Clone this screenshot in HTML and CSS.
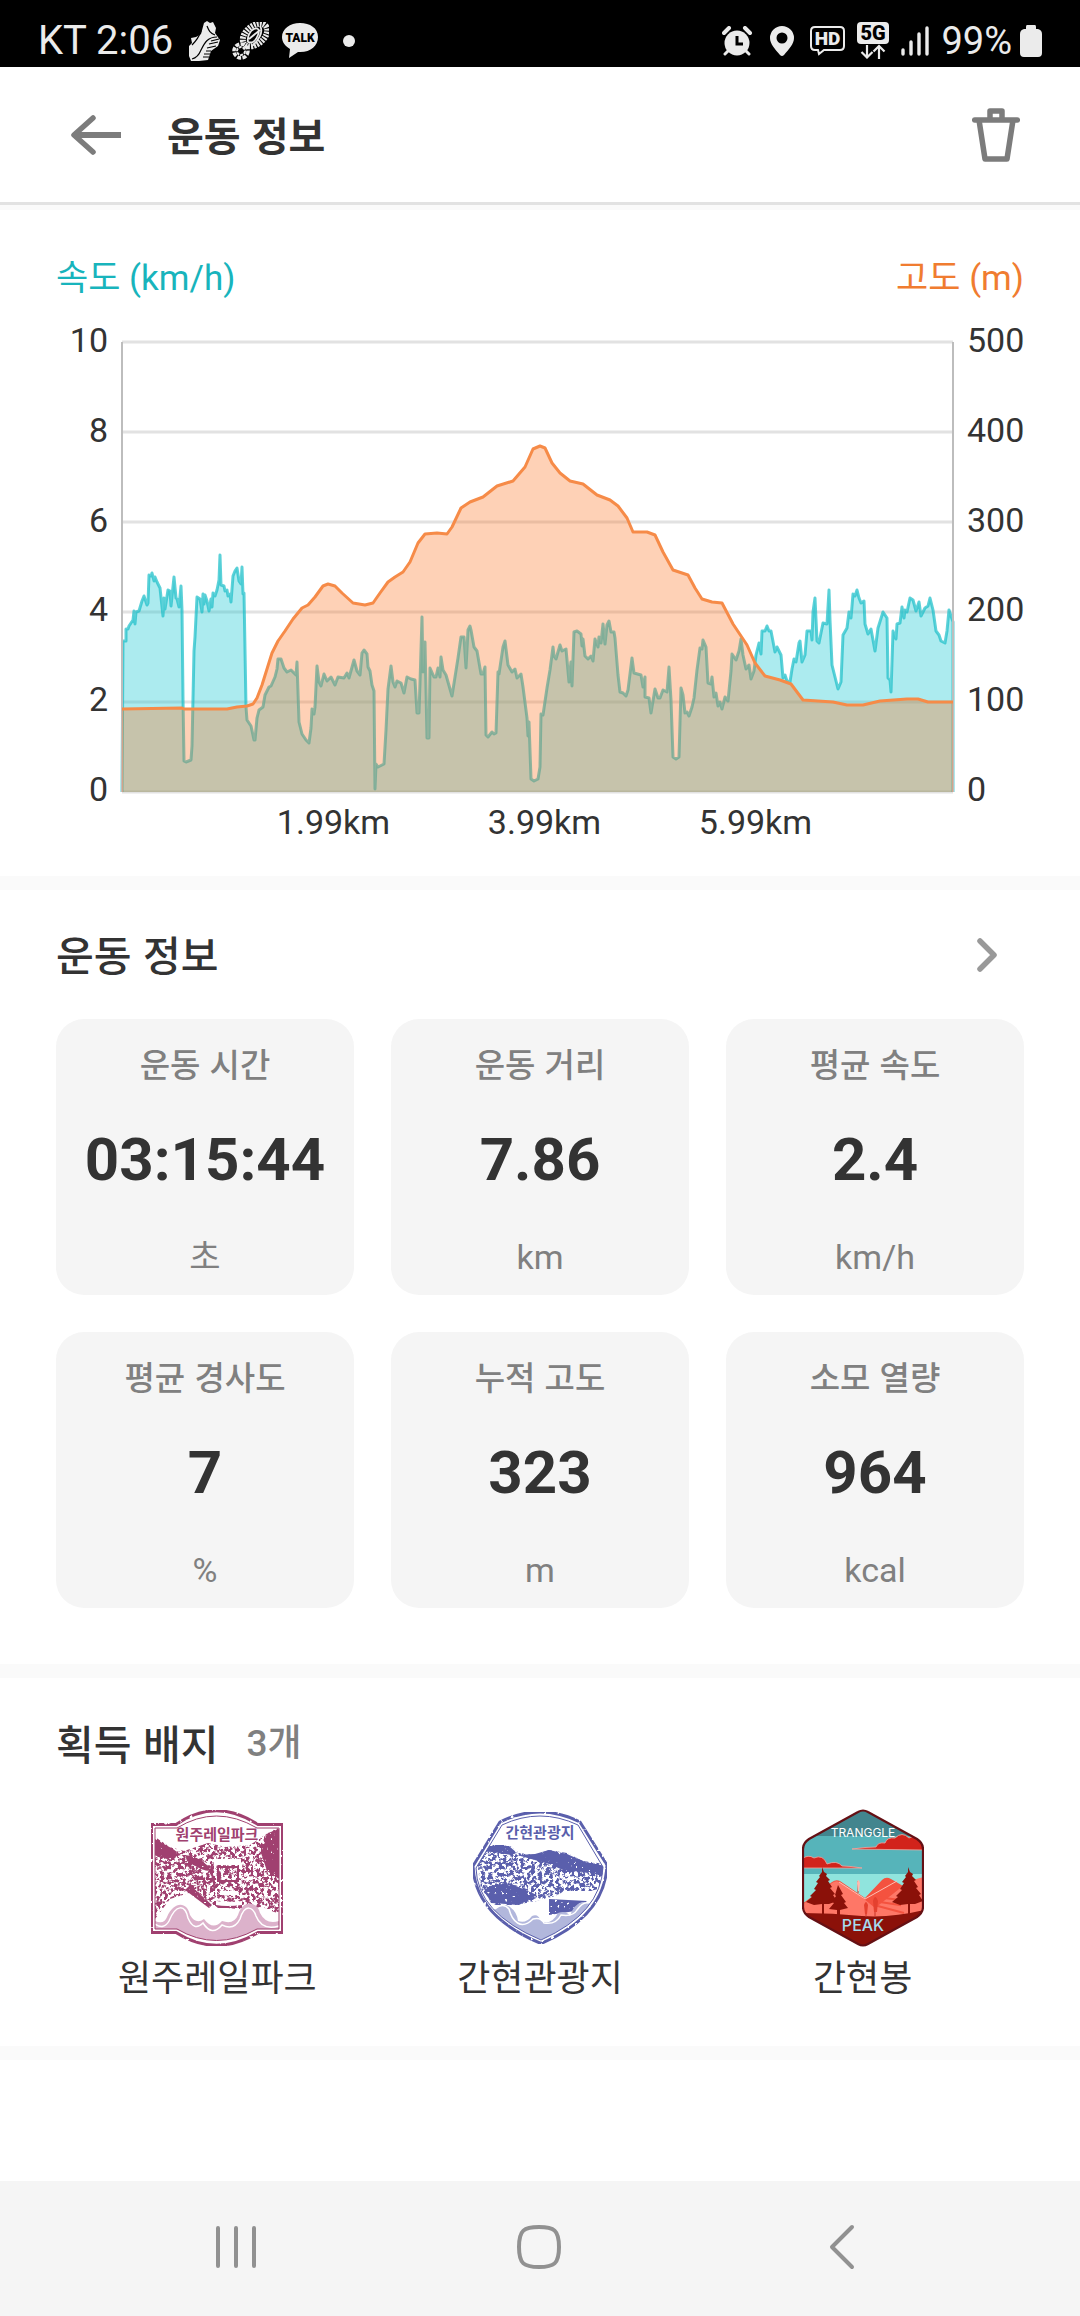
FILE: index.html
```html
<!DOCTYPE html>
<html lang="ko">
<head>
<meta charset="utf-8">
<meta name="viewport" content="width=device-width, initial-scale=1">
<title>운동 정보</title>
<link rel="stylesheet" href="styles.css">
</head>
<body>
<div class="page">
  <div class="status">
    <div class="status-side status-left">
      <span class="clock">KT 2:06</span>
      <svg width="31" height="40" viewBox="0 0 31 40" fill="#ebebeb"><path d="M15 2l3-2 3 2 3-1 3 6-1 5 5 7-2 6-7 5-3 9-9 1H2l-2-5V25l3-3-1-5 5-1 5-3z"/><path d="M28 16c-9 0-12 5-16 13-2 5-5 8-9 9M3 24c4-4 7-8 9-14M18 27l9-2M17 30l5 0M15 33l6 0M14 36l6 0M18 5c2 5 3 7 8 9M20 23l9-2M22 20l8-2" fill="none" stroke="#000" stroke-width="1.2"/></svg>
      <svg width="37" height="38" viewBox="0 0 37 38"><ellipse cx="23" cy="13" rx="14" ry="9" transform="rotate(-40 23 13)" fill="none" stroke="#ebebeb" stroke-width="6" stroke-dasharray="2 1"/><path d="M16 20c-1-6 2-11 6-13s6 1 4 6-5 9-10 7M17 17l11-9M28 4c4 6-2 15-8 20" fill="none" stroke="#ebebeb" stroke-width="1.8"/><circle cx="9" cy="29" r="7" fill="none" stroke="#ebebeb" stroke-width="3.5" stroke-dasharray="4 1.4"/><circle cx="9" cy="29" r="4" fill="none" stroke="#ebebeb" stroke-width="2" stroke-dasharray="3 1"/></svg>
      <svg width="38" height="37" viewBox="0 0 38 37"><path d="M19 1C9 1 1 7 1 15c0 5 3 9 8 12L8 36l9-6c12 1 20-6 20-15S29 1 19 1z" fill="#ebebeb"/><text x="19" y="20" class="ico-text" font-size="12" text-anchor="middle">TALK</text></svg>
      <span class="dot"></span>
    </div>
    <div class="status-side">
      <svg width="32" height="30" viewBox="0 0 32 30"><circle cx="15" cy="17" r="12.500" fill="#ebebeb"/><path d="M2 7l5-5M23 2l5 5" stroke="#ebebeb" stroke-width="4" stroke-linecap="round"/><path d="M7 24l-4 4M23 24l4 4" stroke="#ebebeb" stroke-width="3" stroke-linecap="round"/><path d="M15 10v8h6" fill="none" stroke="#000" stroke-width="3"/></svg>
      <svg width="32" height="30" viewBox="0 0 32 30"><path d="M16 0a12 12 0 0 0-12 12c0 6 5 11 10 17q2 2 4 0c5-6 10-11 10-17A12 12 0 0 0 16 0zm0 6.500a5.500 5.500 0 1 1 0 11 5.500 5.500 0 0 1 0-11z" fill="#ebebeb"/></svg>
      <svg width="35" height="30" viewBox="0 0 35 30"><path d="M5 1h25q4 0 4 4v15q0 4-4 4H14l-5 4-1-4H5q-4 0-4-4V5q0-4 4-4z" fill="none" stroke="#ebebeb" stroke-width="2"/><text x="17.500" y="19" class="ico-text hd" font-size="19" text-anchor="middle">HD</text></svg>
      <svg width="32" height="37" viewBox="0 0 32 37"><rect width="32" height="22" rx="4" fill="#ebebeb"/><text x="16" y="18" class="ico-text" font-size="20" text-anchor="middle">5G</text><path d="M10 23v12M4.500 30l5.500 5.500L15.500 30M22 37V24M16.500 29.500L22 24l5.500 5.500" fill="none" stroke="#ebebeb" stroke-width="2.200"/></svg>
      <svg width="28" height="30" viewBox="0 0 28 30"><path d="M2 24v4M10 16v12M18 8v20M26 2v26" stroke="#ebebeb" stroke-width="3.400" stroke-linecap="round"/></svg>
      <span class="battery"><span class="percent">99%</span>
      <svg width="22" height="32" viewBox="0 0 22 32"><path d="M7 0h8q1 0 1 2v2h2q4 1 4 5v19q0 4-4 4H4q-4 0-4-4V9q0-4 4-5h2V2q0-2 1-2z" fill="#ebebeb"/></svg></span>
    </div>
  </div>

  <header class="header">
    <button class="icon-button" aria-label="뒤로"><svg width="50" height="40" viewBox="0 0 50 40" fill="none" stroke="#7c7c7c" stroke-width="6"><path d="M3 20h47"/><path d="M22 3L3 20l19 17" stroke-linecap="round" stroke-linejoin="round" stroke-width="5.500"/></svg></button>
    <h1 class="title">운동 정보</h1>
    <button class="icon-button" aria-label="삭제"><svg width="48" height="54" viewBox="0 0 48 54" fill="none" stroke="#7c7c7c" stroke-width="5.500" stroke-linejoin="round"><path d="M2.700 12h42.600" stroke-linecap="round"/><path d="M18 11V3h12v8M7 12l6 39h22l6-39"/></svg></button>
  </header>

  <main>
    <section class="section chart">
      <div class="chart-heads"><span class="speed">속도 (km/h)</span><span class="altitude">고도 (m)</span></div>
      <div class="chart-grid">
        <div class="axis axis-left"><span>10</span><span>8</span><span>6</span><span>4</span><span>2</span><span>0</span></div>
        <svg class="plot" viewBox="0 0 831 450" preserveAspectRatio="none" role="img" aria-label="속도와 고도">
          <path d="M0 0H831M0 90H831M0 180H831M0 270H831M0 360H831M0 450H831" class="gridline"/>
          <path class="speed-area" d="M0 450L1 299 4 299 4 287 6 287 7 284 11 278 12 269 13 282 14 270 17 269 20 259 22 254 25 263 26 261 27 233 29 234 30 231 32 239 33 235 35 240 38 246 41 274 42 256 43 267 46 248 48 249 49 264 52 235 54 256 55 257 57 265 59 244 60 268 61 357 62 419 64 420 69 418 70 404 72 309 73 295 75 255 78 257 80 270 81 252 82 262 83 253 85 259 87 269 89 257 90 265 91 251 93 254 95 248 97 238 98 213 99 243 102 244 103 249 105 248 106 254 108 252 109 260 111 234 113 229 115 226 117 239 119 242 120 225 121 252 122 251 124 365 125 378 129 384 132 398 133 398 135 376 137 368 141 365 143 353 147 345 149 344 153 335 155 327 156 317 159 317 162 326 165 330 169 328 174 333 175 320 177 380 180 392 184 398 187 401 189 386 190 367 192 372 193 365 195 324 197 340 199 344 202 332 205 339 209 335 213 343 216 335 222 336 225 331 227 336 232 318 235 329 238 333 240 311 242 308 245 312 246 325 248 329 250 343 252 349 253 447 254 422 256 425 262 422 264 388 266 347 269 324 271 340 273 345 275 339 279 341 282 351 285 335 289 337 293 338 295 371 297 371 298 341 300 275 301 330 303 300 305 396 307 396 308 326 312 335 314 335 316 326 318 335 319 315 321 328 324 333 330 354 333 335 336 316 339 295 342 295 344 326 346 288 348 284 349 288 352 305 355 309 359 332 361 332 363 325 364 393 366 395 370 390 372 392 374 391 376 330 377 332 381 305 383 299 386 323 390 330 393 327 395 336 399 332 401 345 405 376 406 394 407 380 409 437 412 439 416 437 418 425 419 372 421 373 425 346 428 328 431 305 432 314 434 317 438 303 440 309 444 307 447 340 449 320 450 344 452 290 455 289 459 292 460 304 461 297 463 314 466 317 469 314 471 319 473 297 476 305 477 295 479 301 481 282 483 302 485 283 487 279 489 290 492 290 493 296 496 333 498 350 501 351 504 354 506 348 510 316 512 331 519 333 521 345 523 335 523 355 527 356 529 371 533 347 536 356 538 356 541 348 545 350 547 325 549 358 551 415 554 417 557 415 559 346 561 353 563 371 565 370 567 374 570 365 572 356 575 328 578 306 580 307 581 298 584 305 586 341 589 342 590 335 592 355 594 351 596 364 598 360 600 367 603 355 606 359 609 329 610 312 614 318 617 309 619 297 621 313 624 327 627 323 629 337 632 329 634 313 637 301 639 312 640 289 643 289 645 284 647 289 649 289 653 310 655 305 659 313 661 336 663 333 665 339 668 340 670 327 672 317 674 320 677 301 678 299 680 320 683 313 685 289 689 289 690 298 691 270 693 256 695 299 697 301 701 281 705 282 707 248 708 278 710 323 713 335 716 347 719 340 721 293 725 286 727 270 729 276 731 252 733 254 735 248 737 256 739 261 742 259 743 282 746 292 749 287 753 309 756 286 761 270 765 276 766 336 768 338 769 350 771 289 774 297 775 282 778 281 780 265 782 276 783 268 785 270 788 256 791 258 794 269 797 260 799 274 803 266 806 264 808 256 811 268 814 289 817 293 819 299 823 301 825 289 827 268 831 280V450"/>
          <path d="M0 0V450M831 0V450" class="axisline"/>
          <path class="altitude-area" d="M0 367L60 366 62 367 105 367 115 365 125 364 131 362 135 356 140 343 145 327 150 311 156 299 163 289 171 277 180 266 186 263 193 255 201 244 206 242 213 244 220 251 231 261 243 263 251 261 258 251 266 240 273 235 281 230 288 220 296 201 303 192 315 191 325 192 330 185 339 166 348 160 361 155 375 144 391 139 403 125 411 107 418 104 423 106 430 121 438 131 448 139 461 142 475 153 488 158 496 164 505 176 511 190 525 190 533 193 541 210 551 228 566 233 573 246 580 257 590 260 600 261 611 282 625 303 633 321 643 334 658 338 669 342 681 358 711 360 725 363 741 363 758 359 785 357 796 357 806 360 831 360V450H0Z"/>
          <path class="altitude-line" d="M0 367L60 366 62 367 105 367 115 365 125 364 131 362 135 356 140 343 145 327 150 311 156 299 163 289 171 277 180 266 186 263 193 255 201 244 206 242 213 244 220 251 231 261 243 263 251 261 258 251 266 240 273 235 281 230 288 220 296 201 303 192 315 191 325 192 330 185 339 166 348 160 361 155 375 144 391 139 403 125 411 107 418 104 423 106 430 121 438 131 448 139 461 142 475 153 488 158 496 164 505 176 511 190 525 190 533 193 541 210 551 228 566 233 573 246 580 257 590 260 600 261 611 282 625 303 633 321 643 334 658 338 669 342 681 358 711 360 725 363 741 363 758 359 785 357 796 357 806 360 831 360"/>
        </svg>
        <div class="axis axis-right"><span>500</span><span>400</span><span>300</span><span>200</span><span>100</span><span>0</span></div>
        <div class="axis-bottom"><span>1.99km</span><span>3.99km</span><span>5.99km</span></div>
      </div>
    </section>

    <section class="section">
      <div class="section-head info-head">
        <h2>운동 정보</h2>
        <button class="icon-button" aria-label="더 보기"><svg width="20" height="34" viewBox="0 0 20 34" fill="none" stroke="#999" stroke-width="5.500" stroke-linecap="round" stroke-linejoin="round"><path d="M3 3l14 14L3 31"/></svg></button>
      </div>
      <div class="cards">
        <div class="card"><span class="label">운동 시간</span><strong>03:15:44</strong><span class="unit">초</span></div>
        <div class="card"><span class="label">운동 거리</span><strong>7.86</strong><span class="unit">km</span></div>
        <div class="card"><span class="label">평균 속도</span><strong>2.4</strong><span class="unit">km/h</span></div>
        <div class="card"><span class="label">평균 경사도</span><strong>7</strong><span class="unit">%</span></div>
        <div class="card"><span class="label">누적 고도</span><strong>323</strong><span class="unit">m</span></div>
        <div class="card"><span class="label">소모 열량</span><strong>964</strong><span class="unit">kcal</span></div>
      </div>
    </section>

    <section class="section">
      <div class="section-head badge-head"><h2>획득 배지</h2><span class="count">3개</span></div>
      <div class="badges">
        <figure class="badge">
          <svg width="134" height="138" viewBox="0 0 134 138">
            <defs>
              <filter id="ink" x="0" y="0" width="1" height="1"><feTurbulence type="fractalNoise" baseFrequency="0.28" numOctaves="4" seed="4"/><feColorMatrix values="0 0 0 0 0  0 0 0 0 0  0 0 0 0 0  9 0 0 0 -4"/><feComposite in="SourceGraphic" operator="in"/></filter>
              <filter id="wear" x="0" y="0" width="1" height="1"><feTurbulence type="fractalNoise" baseFrequency="0.3" numOctaves="2" seed="9"/><feColorMatrix values="0 0 0 0 0  0 0 0 0 0  0 0 0 0 0  14 0 0 0 -3.6"/><feComposite in="SourceGraphic" operator="in"/></filter>
              <clipPath id="plate"><path d="M5 19H26Q66-4 108 19H129V120H108Q66 143 26 120H5Z"/></clipPath>
            </defs>
            <g clip-path="url(#plate)">
              <path d="M5 28L20 38 34 42 58 34 76 38 100 36 118 24 129 18V105L112 98 88 100 66 98 45 82 20 90 5 110Z" fill="#a0416f" filter="url(#ink)"/>
              <path d="M5 30l18 10 8 6-14 4-12-4zM118 24l11-4v50l-12-8-6-18zM35 46q18 2 26 16-10 0-24-10zM40 76l22 20-3 3-24-18zM62 94h30v5H68z" fill="#a0416f" filter="url(#wear)"/>
              <path d="M64 50h27v6H64zM70 82h18v4H70zM66 92q12 2 26 0v4q-16 2-26 0z" fill="#fff"/>
              <path d="M68 58h20v14H68z" fill="none" stroke="#a0416f" stroke-width="2"/>
              <path d="M38 56q12 12 10 30M50 52q16 10 14 30M44 70h22" fill="none" stroke="#a0416f" stroke-width="2" stroke-dasharray="5 1"/>
              <path d="M5 112q9 4 12-4c7-16 20-16 23-2q6 10 14 4 9 12 18 2 12 4 16-6c5-16 19-14 22-2q6 12 19 8V138H5z" fill="#dcb2cb"/>
              <path d="M5 115q9 6 14-3c7-17 16-17 19-3q6 14 15 5 9 14 19 2 12 6 18-6c5-16 13-12 16-3q6 15 23 10" fill="none" stroke="#fff" stroke-width="1.500"/>
            </g>
            <path d="M1.500 15.500H26Q66-12 108 15.500H132.500V123.500H108Q66 149 26 123.500H1.500Z" fill="none" stroke="#a0416f" stroke-width="3" filter="url(#wear)"/>
            <path d="M5 19H27Q66-5 107 19H129V120H107Q66 143 27 120H5Z" fill="none" stroke="#a0416f" stroke-width="1"/>
            <text x="67" y="31" font-size="15" class="stamp-text" fill="#a0416f">원주레일파크</text>
          </svg>
          <figcaption>원주레일파크</figcaption>
        </figure>
        <figure class="badge">
          <svg width="138" height="138" viewBox="0 0 138 138">
            <defs><clipPath id="shield"><path d="M31 16Q69 0 107 16L132 58Q130 104 70 131 6 104 5 59Z"/></clipPath></defs>
            <g clip-path="url(#shield)">
              <path d="M4 40L14 36H38L48 44 64 46 78 41 96 44 112 52 134 55V78L120 82 94 82 84 87 66 92 44 96 24 96 10 80Z" fill="#5a5fac" filter="url(#ink)"/>
              <path d="M14 37H38L46 44 40 46 14 42zM46 46l18-1 14-4 18 4 18 8 20 4v10l-22-4-20-2-14-6zM12 78l26-4 28 12-18 10-28-2zM78 90l38 2-12 10-26 4z" fill="#5a5fac" filter="url(#wear)"/>
              <path d="M22 102q8-10 17-4 7 5 8 14 8 3 14-5 6-3 9 5 10 5 17-8 8-3 12 3 4-12 12-14 10-1 12 8L70 136 28 116z" fill="#b2b7dc"/>
              <path d="M24 100q8-7 14 0c3 12 12 22 24 10q8-2 11 4 12 2 17-8 12 2 16-5 6-9 12-7" fill="none" stroke="#fff" stroke-width="1.500"/>
            </g>
            <path d="M29 13Q69-7 109 13L136 56Q134 107 70 134.500 4 107 2 57Z" fill="none" stroke="#5a5fac" stroke-width="3" stroke-linejoin="round" filter="url(#wear)"/>
            <path d="M31 16Q69-2 107 16L132 58Q130 104 70 131 6 104 5 59Z" fill="none" stroke="#5a5fac" stroke-width="1"/>
            <text x="69" y="29" font-size="15" class="stamp-text" fill="#5a5fac">간현관광지</text>
          </svg>
          <figcaption>간현관광지</figcaption>
        </figure>
        <figure class="badge">
          <svg width="122" height="138" viewBox="0 0 122 138">
            <defs><clipPath id="hex"><path d="M56 3q5-3 10 0l49 27q6 4 6 10v58q0 6-6 10l-49 27q-5 3-10 0L7 108q-6-4-6-10V40q0-6 6-10z"/></clipPath></defs>
            <g clip-path="url(#hex)">
              <path d="M0 0h122v138H0z" fill="#56b4ba"/><path d="M0 0h122v27H0z" fill="#42858e"/><path d="M0 65h122v50H0z" fill="#90e4dd"/>
              <path d="M50 40q14-2 24-2 2-5 9-4 2-6 10-5 7-7 14 0 8-4 15 0v12z" fill="#d2231b" stroke="#f3aaa2" stroke-width=".8"/>
              <path d="M0 50q6-5 12-1 9-4 13 6 10-4 15 2 8 0 20 2H0z" fill="#d2231b" stroke="#f3aaa2" stroke-width=".8"/>
              <path d="M0 95l30-22q4-3 8-1l25 17 17-18q4-4 9-1l33 19v25H0z" fill="#f4523f"/>
              <path d="M0 96l30-22q4-3 7-1 20 12 36 26l33-26q10-4 16-5v58H0z" fill="#fe7767"/>
              <path d="M37 73l26 17M63 90l32-18" stroke="#ffc0b4" fill="none"/>
              <path d="M74 88l24 3v5l-20-3M72 96l30 8" stroke="#f4523f" stroke-width="2" fill="none"/>
              <path d="M0 104q30 0 60 3 30 2 62-6v40H0z" fill="#8b1109"/>
              <path d="M64 94v14M73 90v18M56 72v12" stroke="#c73526"/><path d="M62 96q2-6 4 0l-1 9h-2zM71 92q2-8 5 0l-1 11h-3z" fill="#e4412f"/><path d="M55 74q1-6 3 0l-1 8h-1z" fill="#ffb9ae"/>
              <path id="tree" d="M20 58l2 5 3 2-1 2 4 4-2 1 4 6-2 1 5 6-2 1 4 6-8 3h-5v11h-2V95l-8 1-8-3 6-5-2-1 6-6-2-1 4-6-2-1 4-5-1-1 3-4z" fill="#8b1109"/>
              <path d="M36 76l5 9-2 1 5 7-2 1 4 5-8 2v6h-3v-6l-8-1 5-6-2-1 4-6-1-1z" fill="#8b1109"/>
              <use href="#tree" x="86"/>
            </g>
            <path d="M56 3q5-3 10 0l49 27q6 4 6 10v58q0 6-6 10l-49 27q-5 3-10 0L7 108q-6-4-6-10V40q0-6 6-10z" fill="none" stroke="#651014" stroke-width="2.200"/>
            <text x="61" y="28" font-size="12" class="peak-text" fill="#fff">TRANGGLE</text>
            <text x="61" y="122" font-size="16" class="peak-text peak-bottom" fill="#a5dcf0">PEAK</text>
          </svg>
          <figcaption>간현봉</figcaption>
        </figure>
      </div>
    </section>
  </main>

  <nav class="nav">
    <button class="icon-button" aria-label="최근 앱"><svg width="42" height="46" viewBox="0 0 42 46" stroke="#919191" stroke-width="4" stroke-linecap="round"><path d="M3 4v38M21 4v38M39 4v38"/></svg></button>
    <button class="icon-button" aria-label="홈"><svg width="46" height="46" viewBox="0 0 46 46" fill="none" stroke="#919191" stroke-width="4"><path d="M23 3c15 0 20 3 20 20s-5 20-20 20S3 40 3 23 8 3 23 3z"/></svg></button>
    <button class="icon-button" aria-label="이전"><svg width="26" height="46" viewBox="0 0 26 46" fill="none" stroke="#919191" stroke-width="4" stroke-linecap="round" stroke-linejoin="round"><path d="M23 3L3 23l20 20"/></svg></button>
  </nav>
</div>
</body>
</html>
```
FILE: styles.css
```css
* { box-sizing: border-box; }
body {
  margin: 0;
  background: #fff;
  color: #333;
  font-family: "Noto Sans CJK KR", sans-serif;
}
h1, h2, figure { margin: 0; }
svg { display: block; }
.page {
  display: flex;
  flex-direction: column;
  min-height: 100vh;
}
.icon-button {
  border: 0;
  padding: 0;
  background: none;
}

/* status bar */
.status {
  display: flex;
  justify-content: space-between;
  height: 67px;
  padding: 14px 38px 0;
  background: #000;
  color: #ebebeb;
  font-family: Roboto, sans-serif;
}
.status-side {
  display: flex;
  align-items: center;
  height: 53px;
  gap: 12px;
}
.clock { margin-right: 4px; font-size: 40px; line-height: 52px; }
.battery { display: flex; align-items: center; gap: 8px; }
.percent { font-size: 38px; line-height: 52px; }
.dot {
  width: 12px;
  height: 12px;
  margin-left: 12px;
  border-radius: 50%;
  background: #ebebeb;
}
.ico-text { font-family: Roboto, sans-serif; font-weight: 900; fill: #000; }
.hd { fill: #ebebeb; }

/* title bar */
.header {
  display: flex;
  align-items: center;
  height: 143px;
  padding: 0 60px 3px 71px;
  border-bottom: 5px solid #fafafa;
  box-shadow: inset 0 -3px #e2e2e2;
}
.title {
  flex: 1;
  margin-left: 46px;
  padding-bottom: 2px;
  font-size: 40px;
  font-weight: 700;
  line-height: 60px;
}

/* sections */
.section {
  padding: 0 56px 56px;
  border-bottom: 14px solid #fafafa;
}
.section-head {
  display: flex;
  align-items: center;
  gap: 28px;
  height: 129px;
}
.info-head { justify-content: space-between; padding-right: 27px; }
.badge-head { height: 131px; }
h2 { padding-bottom: 4px; font-size: 41px; font-weight: 500; line-height: 60px; }
.count {
  color: #808080;
  font-family: Roboto, "Noto Sans CJK KR", sans-serif;
  font-size: 37px;
  font-weight: 500;
  line-height: 60px;
}

/* chart */
.chart { padding-top: 44px; padding-bottom: 33px; }
.chart-heads {
  display: flex;
  justify-content: space-between;
  font-family: Roboto, "Noto Sans CJK KR", sans-serif;
  font-size: 35px;
  line-height: 50px;
}
.speed { color: #18b4bc; }
.altitude { color: #f07c30; }
.chart-grid {
  display: grid;
  grid-template-columns: 66px 1fr 71px;
  margin-top: 16px;
  font-family: Roboto, sans-serif;
  font-size: 34px;
  line-height: 40px;
}
.axis {
  display: flex;
  flex-direction: column;
  justify-content: space-between;
  height: 489px;
}
.axis-left { text-align: right; padding-right: 14px; }
.axis-right { padding-left: 14px; }
.plot { width: 100%; height: 450px; margin-top: 22px; overflow: visible; }
.axis-bottom {
  grid-column: 2;
  display: grid;
  grid-template-columns: 106fr 211fr 211fr 211fr 92fr;
  margin-top: -7px;
  height: 41px;
  text-align: center;
}
.axis-bottom span:first-child { grid-column: 2; }
.gridline { stroke: #e2e2e2; stroke-width: 3; }
.axisline { stroke: #bdbdbd; stroke-width: 2; }
.speed-area { fill: rgba(24, 199, 210, .36); stroke: rgba(24, 190, 200, .7); stroke-width: 3; stroke-linejoin: round; }
.altitude-area { fill: rgba(251, 116, 32, .33); }
.altitude-line { fill: none; stroke: #f68b48; stroke-width: 3; stroke-linejoin: round; }

/* statistics */
.cards {
  display: grid;
  grid-template-columns: repeat(3, 1fr);
  gap: 37px;
}
.card {
  display: flex;
  flex-direction: column;
  justify-content: space-between;
  height: 276px;
  padding: 18px 0 12px;
  border-radius: 28px;
  background: #f5f5f5;
  text-align: center;
}
.label, .unit { color: #808080; font-size: 33px; font-weight: 500; line-height: 52px; }
.unit { font-family: Roboto, "Noto Sans CJK KR", sans-serif; font-size: 34px; font-weight: 400; }
.card strong {
  font-family: Roboto, sans-serif;
  font-size: 60px;
  font-weight: 700;
  line-height: 90px;
}

/* badges */
.badges {
  display: grid;
  grid-template-columns: repeat(3, 1fr);
}
.badge {
  display: flex;
  flex-direction: column;
  align-items: center;
}
.badge figcaption { margin-top: 3px; font-size: 36px; line-height: 50px; }
.badge svg { flex: none; }
.section:last-child { padding-bottom: 46px; }
.stamp-text { font-weight: 700; text-anchor: middle; }
.peak-text { font-family: Inter, sans-serif; text-anchor: middle; }
.peak-bottom { font-weight: 500; }

/* system navigation */
.nav {
  display: grid;
  grid-template-columns: repeat(3, 1fr);
  align-items: center;
  justify-items: center;
  height: 135px;
  margin-top: auto;
  padding: 0 86px 3px 84px;
  background: #f5f5f5;
}
```
